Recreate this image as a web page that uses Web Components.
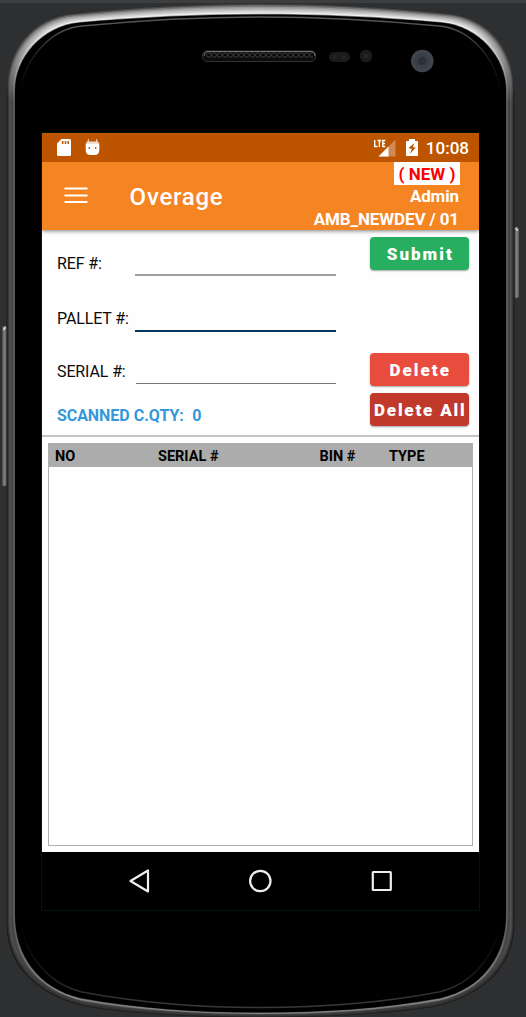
<!DOCTYPE html>
<html lang="en">
<head>
<meta charset="utf-8">
<title>Overage</title>
<style>
body{margin:0;background:#2e2f31;font-family:Roboto,"Open Sans",sans-serif;overflow:hidden}
</style>
</head>
<body>
<phone-frame>
  <status-bar time="10:08"></status-bar>
  <app-bar heading="Overage">
    <span slot="badge">( NEW )</span>
    <span slot="user">Admin</span>
    <span slot="site">AMB_NEWDEV / 01</span>
  </app-bar>
  <scan-form>
    <form-field label="REF #:" style="height:46px;--line:#a0a0a0;--w:2px"></form-field>
    <form-field label="PALLET #:" style="height:56px;--line:#003660;--w:2px;--drop:3px"></form-field>
    <form-field label="SERIAL #:" style="height:52px;--line:#777;--w:1px;--inset:1px"></form-field>
    <span slot="count">SCANNED C.QTY:&nbsp; 0</span>
    <push-button slot="actions" style="--bg:#27ae60;margin-bottom:83px">Submit</push-button>
    <push-button slot="actions" style="--bg:#e74c3c;margin-bottom:7px">Delete</push-button>
    <push-button slot="actions" style="--bg:#c0392b;--sp:1.8px">Delete All</push-button>
  </scan-form>
  <scan-table></scan-table>
  <nav-bar></nav-bar>
</phone-frame>
<script>
const define = (name, html, setup) => customElements.define(name, class extends HTMLElement {
  constructor() {
    super();
    this.attachShadow({mode: 'open'}).innerHTML = html;
  }
  connectedCallback() { if (setup) setup(this, this.shadowRoot); }
});

define('phone-frame', `
<style>
:host{display:block;position:relative;width:526px;height:1017px;box-sizing:border-box;padding:133px 47px 0 42px;overflow:hidden}
svg{position:absolute;left:0;top:0}
.screen{position:relative;display:flex;flex-direction:column;width:437px;height:777px;background:#fefefe;outline:1px solid #001607}
</style>
<svg width="526" height="1017" viewBox="0 0 526 1017" fill="none">
  <defs>
    <linearGradient id="key" x1="0" x2="1" y1="0" y2="0"><stop stop-color="#333"/><stop offset=".5" stop-color="#858585"/><stop offset="1" stop-color="#555"/></linearGradient>
    <pattern id="mesh" x="206" y="52" width="5.45" height="7" patternUnits="userSpaceOnUse"><circle cx="2.7" cy="3" r="2.2" fill="#050505" stroke="#4c4c4c" stroke-width=".8"/></pattern>
  </defs>
  <rect width="526" height="3" fill="#3c3e40"/>
  <rect x="1.5" y="326" width="5.5" height="160" rx="2.5" fill="url(#key)"/>
  <path d="M3.500 330Q4 328 6 327.500" stroke="#ddd" stroke-width="1.500"/>
  <rect x="514" y="227" width="5" height="71" rx="2.5" fill="url(#key)"/>
  <path d="M515 228.500Q517.500 229 517.500 231" stroke="#ccc" stroke-width="1.500"/>
  <g id="rim"></g>
  <rect x="202.500" y="51" width="113" height="10.500" rx="4.500" fill="#0c0c0c" stroke="#333"/>
  <path d="M204 56Q204 51.500 208 51.500H311Q315 51.500 315 56" stroke="#777"/>
  <rect x="206" y="52" width="107" height="7" fill="url(#mesh)"/>
  <rect x="329" y="52" width="21" height="10" rx="5" fill="#1b1b1b"/>
  <circle cx="334.500" cy="57" r="2.200" fill="#252525"/><circle cx="344" cy="57" r="2.200" fill="#252525"/>
  <circle cx="366" cy="56" r="6.300" fill="#1c1c1c"/><circle cx="366" cy="56" r="2.300" fill="#262626"/>
  <circle cx="422.300" cy="61" r="11.300" fill="#40454d"/><circle cx="422.300" cy="61" r="8" fill="#3b4048"/><circle cx="422.300" cy="61" r="4.300" fill="#2b303a"/>
</svg>
<div class="screen"><slot></slot></div>`, (el, root) => {
  // The rim is a stack of outlines blended from the outer edge to the glass.
  const outer = [6.5,88, 7,52, 31,18, 73,14, 140,7, 200,4, 260.5,4, 6.5,925, 7,972, 45,998, 87,1007, 140,1015, 200,1017.5, 260.5,1017.5];
  const inner = [15,90, 15,58, 42,26, 80,22.5, 145,17, 200,14.5, 260.5,14.5, 15,915, 15,955, 38,988, 80,998, 140,1009, 200,1012.5, 260.5,1012.5];
  const groove = [20,98, 22,60, 50,29, 82,26, 145,20, 200,17, 260.5,17, 20,915, 22,950, 45,983, 82,992, 140,1003, 200,1007.5, 260.5,1007.5];
  const trace = p => {
    const m = p.map((v, i) => i % 2 ? v : 521 - v);
    const c = (a, ...k) => 'C' + k.map(i => a[i] + ' ' + a[i + 1]).join(' ');
    return `M${p[0]} ${p[1]}` + c(p,2,4,6) + c(p,8,10,12) + c(m,10,8,6) + c(m,4,2,0) +
      `L${m[14]} ${m[15]}` + c(m,16,18,20) + c(m,22,24,26) + c(p,24,22,20) + c(p,18,16,14) + 'Z';
  };
  const outline = t => trace(outer.map((v, i) => v + (inner[i] - v) * t));
  const rings = [
    [0,   '#484848', '#1b1b1b', '#1b1b1b'],
    [.12, '#747474', '#303030', '#2b2b2b'],
    [.25, '#989898', '#484848', '#343434'],
    [.4,  '#b2b2b2', '#515151', '#393939'],
    [.55, '#c8c8c8', '#424242', '#444444'],
    [.7,  '#dadada', '#484848', '#777777'],
    [.82, '#f0f0f0', '#666666', '#929292'],
    [.93, '#8a8a8a', '#505050', '#555555']
  ];
  let s = '';
  rings.forEach(([t, a, b, c], i) => {
    s += `<linearGradient id="r${i}" gradientUnits="userSpaceOnUse" x1="0" y1="0" x2="0" y2="1017"><stop offset="0.012" stop-color="${a}"/><stop offset=".03" stop-color="${a}"/><stop offset=".1" stop-color="${b}"/><stop offset=".92" stop-color="${b}"/><stop offset=".975" stop-color="${c}"/></linearGradient><path d="${outline(t)}" fill="url(#r${i})"/>`;
  });
  s += `<path d="${outline(1)}" fill="#000"/>
  <linearGradient id="in" gradientUnits="userSpaceOnUse" x1="0" y1="0" x2="0" y2="1017"><stop offset=".025" stop-color="#555"/><stop offset=".06" stop-color="#181818"/><stop offset=".09" stop-color="#000"/><stop offset=".91" stop-color="#000"/><stop offset=".955" stop-color="#181818"/><stop offset=".985" stop-color="#383838"/></linearGradient>
  <path d="${trace(groove)}" stroke="url(#in)" stroke-width="1.5"/>`;
  root.getElementById('rim').innerHTML = s;
});

define('status-bar', `
<style>
:host{display:flex;align-items:center;height:29px;background:#bd5500;color:#fff;padding:0 10px 0 15px;flex:none;box-sizing:border-box}
.sp{flex:1}
svg{display:block}
span{font-size:17px;font-weight:500;line-height:29px;padding-top:2px}
</style>
<svg width="14" height="17" viewBox="0 0 14 17"><path d="M4.500 0H12.500Q14 0 14 1.500V15.500Q14 17 12.500 17H1.500Q0 17 0 15.500V4.500Z" fill="#fff"/><path d="M5.700 2v3M8.500 2v3M11.200 2v3" stroke="#bd5500" stroke-width="1.500"/></svg>
<svg style="margin:0 0 2px 14px" width="15" height="18" viewBox="0 0 15 18"><path d="M3.300 1V5M11.700 1V5" stroke="#f4ddcc" stroke-width="1"/><path d="M.7 6H14.300V12Q14.300 17 9.500 17H5.500Q.7 17 .7 12Z" fill="#fff"/><path d="M2 3.500H13L14.300 6H.7Z" fill="#f3ddd0"/><circle cx="4.300" cy="10" r=".9" fill="#bd5500"/><circle cx="10.700" cy="10" r=".9" fill="#bd5500"/></svg>
<div class="sp"></div>
<svg width="23" height="18" viewBox="0 0 23 18"><path d="M22.500 .5V17.500H5.500Z" fill="#d28a52"/><path d="M15.500 7.500V17.500H5.500Z" fill="#fff"/><path d="M1.700 1V7.500H4.500M4.500 1.500H8.300M6.400 1.500V8M12.300 1.500H9.800V7.500H12.300M9.800 4.500H12" stroke="#fff" stroke-width="1.400" fill="none"/></svg>
<svg style="margin:0 8px 0 10px" width="12" height="17" viewBox="0 0 12 17"><path d="M3 0H9V2H11.500Q12 2 12 2.500V16.500Q12 17 11.500 17H.5Q0 17 0 16.500V2.500Q0 2 .5 2H3Z" fill="#fff"/><path d="M8.500 4L2.500 9L5.800 10L3.700 15L9.800 8.800L6.800 8Z" fill="#bd5500"/></svg>
<span></span>`, (el, root) => { root.querySelector('span').textContent = el.getAttribute('time'); });

define('app-bar', `
<style>
:host{display:flex;height:68px;flex:none;background:#f58422;color:#fff;box-shadow:0 1px 4px rgba(0,0,0,.5);clip-path:inset(0 0 -8px 0);box-sizing:border-box;padding:0 20px 0 22px}
svg{display:block;margin-top:24px}
h1{font-size:24px;font-weight:500;letter-spacing:.75px;line-height:28px;margin:21.400px 0 0 41.600px}
.info{margin-left:auto;display:flex;flex-direction:column;align-items:flex-end;font-size:17px;font-weight:700;line-height:22.500px;white-space:nowrap;letter-spacing:-.13px}
.badge{background:#fff;color:#f00;height:23px;line-height:25px;width:66px;text-align:center;margin-right:-1px;letter-spacing:0}
</style>
<svg width="24" height="20" viewBox="0 0 24 20"><path d="M.5 2.500H23.500M.5 9.500H23.500M.5 16H23.500" stroke="#fff" stroke-width="2"/></svg>
<h1></h1>
<div class="info"><div class="badge"><slot name="badge"></slot></div><slot name="user"></slot><slot name="site"></slot></div>`,
(el, root) => { root.querySelector('h1').textContent = el.getAttribute('heading'); });

define('form-field', `
<style>
:host{display:flex;align-items:flex-end;box-sizing:border-box}
label{width:78px;flex:none;font-size:16px;letter-spacing:-.12px;line-height:20px;padding-bottom:var(--drop,2px);color:#0a0a0a;white-space:nowrap}
.line{width:calc(201px - var(--inset,0px));height:24px;border-bottom:var(--w) solid var(--line);box-sizing:border-box;margin-left:var(--inset,0)}
</style><label></label><div class="line"></div>`,
(el, root) => { root.querySelector('label').textContent = el.getAttribute('label'); });

define('push-button', `
<style>
:host{display:flex;align-items:center;justify-content:center;width:99px;height:33px;border-radius:4px;background:var(--bg);color:#fff;font-size:17px;font-weight:900;letter-spacing:var(--sp,2px);box-shadow:0 1px 2px rgba(0,0,0,.35);white-space:nowrap;padding:1px 0 0 1.500px;box-sizing:border-box}
</style><slot></slot>`);

define('scan-form', `
<style>
:host{display:flex;justify-content:space-between;height:207px;flex:none;box-sizing:border-box;padding:0 10px 0 15px;border-bottom:1px solid #c8c8c8;box-shadow:inset 0 -1px #c0c0c0}
.actions{padding-top:7px}
.count{color:#3498db;font-size:16px;font-weight:700;line-height:20px;margin-top:22px;white-space:pre;letter-spacing:-.07px;word-spacing:.4px}
</style>
<div><slot></slot><div class="count"><slot name="count"></slot></div></div>
<div class="actions"><slot name="actions"></slot></div>`);

define('scan-table', `
<style>
:host{display:block;flex:1;box-sizing:border-box;margin:6px 6px 6px;border:1px solid #b0b0b0}
.head{display:grid;grid-template-columns:103px 161.500px 69.500px 1fr;height:24px;background:#acacac;color:#000;font-size:14.500px;font-weight:700;line-height:24px;padding:2px 0 0 6px;margin-top:-1px;white-space:nowrap;box-sizing:border-box}
</style>
<div class="head"><span>NO</span><span>SERIAL #</span><span>BIN #</span><span>TYPE</span></div>`);

define('nav-bar', `
<style>
:host{display:flex;align-items:center;height:58px;flex:none;background:#000;padding-left:87px;gap:97px;box-sizing:border-box}
svg{display:block;overflow:visible}
</style>
<svg width="24" height="24" viewBox="0 0 24 24"><path d="M19 1.500V22.500L1.500 12Z" fill="none" stroke="#eee" stroke-width="2.200" stroke-linejoin="round"/></svg>
<svg width="24" height="24" viewBox="0 0 24 24"><circle cx="10.300" cy="12" r="10.200" fill="none" stroke="#eee" stroke-width="2.200"/></svg>
<svg width="24" height="24" viewBox="0 0 24 24"><rect x="1.800" y="3" width="18" height="18" rx=".5" fill="none" stroke="#eee" stroke-width="2.200"/></svg>`);

</script>
</body>
</html>
